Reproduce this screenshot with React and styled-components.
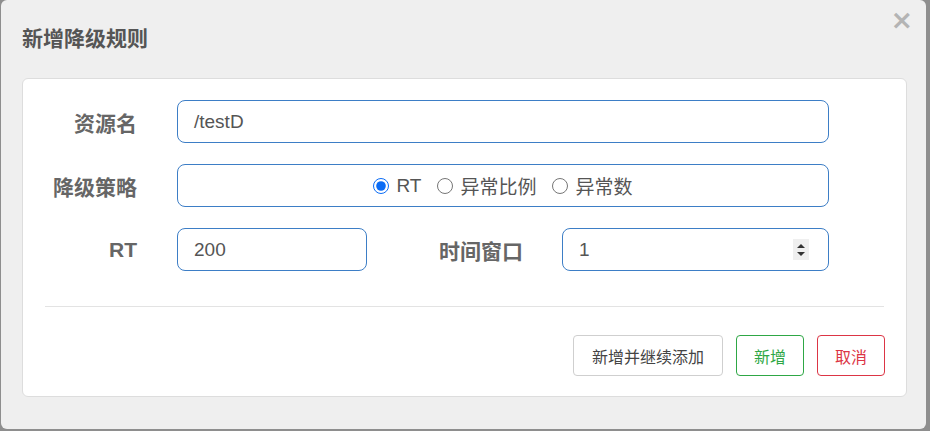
import React from 'react';
import styled, { createGlobalStyle } from 'styled-components';

const GlobalStyle = createGlobalStyle`
  html, body {
    margin: 0;
    padding: 0;
    background: #8e8e8e;
    font-family: "Liberation Sans", "Noto Sans CJK SC", sans-serif;
  }
`;

const Backdrop = styled.div`
  width: 930px;
  height: 431px;
  padding-left: 1px;
  box-sizing: border-box;
  overflow: hidden;
`;

const Modal = styled.div`
  width: 925px;
  height: 429px;
  background: #efefef;
  border-radius: 6px;
  display: flex;
  flex-direction: column;
  position: relative;
`;

const Header = styled.div`
  height: 78px;
  padding: 0 21px;
  display: flex;
  align-items: center;
  justify-content: space-between;
  box-sizing: border-box;
  padding-bottom: 4px;
`;

const Title = styled.h4`
  margin: 0;
  font-size: 21px;
  font-weight: bold;
  color: #555;
  font-family: "Noto Sans CJK SC", sans-serif;
`;

const Close = styled.span`
  position: absolute;
  top: 6px;
  right: 13px;
  font-size: 27px;
  font-weight: bold;
  color: #b4b4b4;
  line-height: 28px;
  font-family: "DejaVu Sans", sans-serif;
`;

const Panel = styled.div`
  margin: 0 19px 0 21px;
  background: #fff;
  border: 1px solid #ddd;
  border-radius: 6px;
  padding: 21px 77px 20px 0;
  display: flex;
  flex-direction: column;
  gap: 21px;
`;

const Row = styled.div`
  display: flex;
  align-items: center;
`;

const Label = styled.label`
  width: ${p => p.$w || 114}px;
  flex: none;
  text-align: right;
  margin-right: ${p => p.$gap || 40}px;
  font-size: 21px;
  font-weight: bold;
  color: #666;
  font-family: "Liberation Sans", "Noto Sans CJK SC", sans-serif;
`;

const Field = styled.div`
  flex: ${p => (p.$w ? 'none' : '1')};
  width: ${p => (p.$w ? `${p.$w}px` : 'auto')};
  height: 43px;
  box-sizing: border-box;
  border: 1px solid #3d7ec6;
  border-radius: 8px;
  display: flex;
  align-items: center;
  justify-content: ${p => (p.$center ? 'center' : 'flex-start')};
  padding: 0 ${p => (p.$center ? '0' : '16px')};
  font-size: 19px;
  color: #555;
  position: relative;
`;

const RadioItem = styled.label`
  display: flex;
  align-items: center;
  margin-right: 16px;
  font-size: 19px;
  color: #555;
  font-family: "Liberation Sans", "Noto Sans CJK SC", sans-serif;

  &:last-child {
    margin-right: 0;
  }

  input {
    width: 16px;
    height: 16px;
    margin: 0 7px 0 0;
    accent-color: #0b6cf5;
  }
`;

const Spinner = styled.div`
  position: absolute;
  right: 19px;
  top: 10px;
  width: 16px;
  height: 21px;
  background: #efefef;
  display: flex;
  align-items: center;
  justify-content: center;
`;

const Divider = styled.hr`
  margin: 14px -55px 0 22px;
  border: none;
  border-top: 1px solid #e3e3e3;
`;

const Footer = styled.div`
  display: flex;
  justify-content: flex-end;
  gap: 13px;
  margin-top: 7px;
  margin-right: -56px;
`;

const Button = styled.button`
  height: 41px;
  padding: 0 ${p => p.$pad || 17}px;
  background: #fff;
  border: 1px solid ${p => p.$border};
  color: ${p => p.$color};
  border-radius: 4px;
  font-size: 16px;
  font-family: "Noto Sans CJK SC", sans-serif;
`;

const Value = styled.span`
  font-family: "Liberation Sans", sans-serif;
`;

export default function App() {
  return (
    <Backdrop>
      <GlobalStyle />
      <Modal>
        <Header>
          <Title>新增降级规则</Title>
        </Header>
        <Close>×</Close>
        <Panel>
          <Row>
            <Label>资源名</Label>
            <Field><Value>/testD</Value></Field>
          </Row>
          <Row>
            <Label>降级策略</Label>
            <Field $center>
              <RadioItem><input type="radio" name="s" defaultChecked />RT</RadioItem>
              <RadioItem><input type="radio" name="s" />异常比例</RadioItem>
              <RadioItem><input type="radio" name="s" />异常数</RadioItem>
            </Field>
          </Row>
          <Row>
            <Label>RT</Label>
            <Field $w={190}><Value>200</Value></Field>
            <Label $w={156} $gap={39}>时间窗口</Label>
            <Field>
              <Value>1</Value>
              <Spinner>
                <svg width="10" height="16" viewBox="0 0 10 16">
                  <path d="M1 6 L5 2 L9 6 Z" fill="#333" />
                  <path d="M1 10 L5 14 L9 10 Z" fill="#333" />
                </svg>
              </Spinner>
            </Field>
          </Row>
          <Divider />
          <Footer>
            <Button $border="#cfcfcf" $color="#444" $pad={18}>新增并继续添加</Button>
            <Button $border="#2ea745" $color="#2ea745">新增</Button>
            <Button $border="#dc3545" $color="#dc3545">取消</Button>
          </Footer>
        </Panel>
      </Modal>
    </Backdrop>
  );
}
